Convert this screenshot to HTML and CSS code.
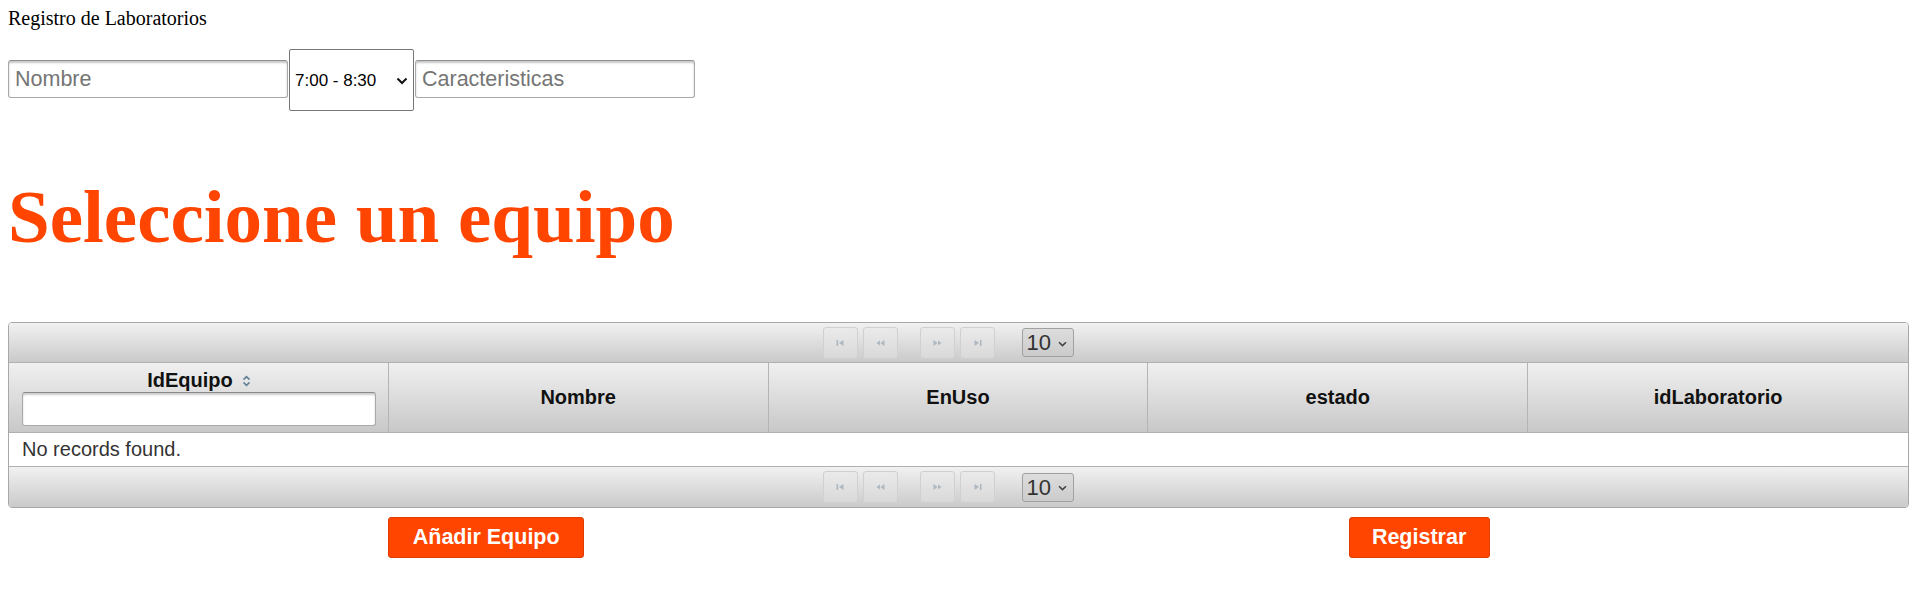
FILE: index.html
```html
<!DOCTYPE html>
<html lang="es">
<head>
<meta charset="utf-8">
<title>Registro de Laboratorios</title>
<link rel="stylesheet" href="styles.css">
</head>
<body>
<div class="title">Registro de Laboratorios</div>
<form class="lab-form">
  <input class="field" type="text" placeholder="Nombre">
  <span class="select-wrap hour-wrap">
    <select class="hour-select"><option>7:00 - 8:30</option></select>
    <svg class="chev chev-hour" width="12" height="8" viewBox="0 0 12 8"><path d="M1.5 1.5L6 6l4.5-4.5"/></svg>
  </span>
  <input class="field" type="text" placeholder="Caracteristicas">
</form>
<h1 class="headline">Seleccione un equipo</h1>
<div class="datatable">
  <div class="paginator paginator-top">
    <span class="pg-btn pg-first"><svg width="11" height="8" viewBox="0 0 11 8"><rect x="1.5" y="1" width="1.6" height="6"/><path d="M8.5 1v6L4 4z"/></svg></span>
    <span class="pg-btn pg-prev"><svg width="11" height="8" viewBox="0 0 11 8"><path d="M5 1.5v5L1.5 4zM9.5 1v6L5.5 4z"/></svg></span>
    <span class="pg-btn pg-next"><svg width="11" height="8" viewBox="0 0 11 8"><path d="M1.5 1v6L5.5 4zM6 1.5v5L9.5 4z"/></svg></span>
    <span class="pg-btn pg-last"><svg width="11" height="8" viewBox="0 0 11 8"><path d="M2.5 1v6L7 4z"/><rect x="7.9" y="1" width="1.6" height="6"/></svg></span>
    <span class="select-wrap rows-wrap">
      <select class="rows-select"><option>10</option></select>
      <svg class="chev chev-rows" width="9" height="6" viewBox="0 0 9 6"><path d="M1 1.2L4.5 4.6 8 1.2"/></svg>
    </span>
  </div>
  <div class="dt-header">
    <div class="th th-filter">
      <div class="th-title">IdEquipo <svg class="sort-icon" width="9" height="12" viewBox="0 0 9 12"><path d="M1.5 4.6L4.5 1.6L7.5 4.6M1.5 7.4L4.5 10.4L7.5 7.4"/></svg></div>
      <input class="filter-input" type="text">
    </div>
    <div class="th">Nombre</div>
    <div class="th">EnUso</div>
    <div class="th">estado</div>
    <div class="th">idLaboratorio</div>
  </div>
  <div class="dt-empty">No records found.</div>
  <div class="paginator paginator-bottom">
    <span class="pg-btn pg-first"><svg width="11" height="8" viewBox="0 0 11 8"><rect x="1.5" y="1" width="1.6" height="6"/><path d="M8.5 1v6L4 4z"/></svg></span>
    <span class="pg-btn pg-prev"><svg width="11" height="8" viewBox="0 0 11 8"><path d="M5 1.5v5L1.5 4zM9.5 1v6L5.5 4z"/></svg></span>
    <span class="pg-btn pg-next"><svg width="11" height="8" viewBox="0 0 11 8"><path d="M1.5 1v6L5.5 4zM6 1.5v5L9.5 4z"/></svg></span>
    <span class="pg-btn pg-last"><svg width="11" height="8" viewBox="0 0 11 8"><path d="M2.5 1v6L7 4z"/><rect x="7.9" y="1" width="1.6" height="6"/></svg></span>
    <span class="select-wrap rows-wrap">
      <select class="rows-select"><option>10</option></select>
      <svg class="chev chev-rows" width="9" height="6" viewBox="0 0 9 6"><path d="M1 1.2L4.5 4.6 8 1.2"/></svg>
    </span>
  </div>
</div>
<div class="actions">
  <button class="btn btn-add" type="button">Añadir Equipo</button>
  <button class="btn btn-register" type="button">Registrar</button>
</div>
</body>
</html>
```
FILE: styles.css
```css
html, body {
  background: #ffffff;
}
body {
  margin: 8px;
  font-family: "Liberation Serif", "Times New Roman", serif;
  font-size: 20px;
  color: #000;
}
.title {
  line-height: 20px;
  height: 20px;
}
.lab-form {
  display: flex;
  align-items: flex-start;
  gap: 1px;
  margin: 21px 0 0 0;
  height: 62px;
}
.field {
  box-sizing: border-box;
  width: 280px;
  height: 38px;
  margin-top: 11px;
  padding: 0 6px;
  border: 1px solid #a9a9a9;
  border-top-color: #8f8f8f;
  border-radius: 3px;
  box-shadow: inset 0 2px 2px rgba(0,0,0,0.22);
  font-family: "Liberation Sans", Arial, sans-serif;
  font-size: 21.5px;
  color: #222;
  background: #fff;
  outline: none;
}
.field::placeholder {
  color: #757575;
}
.select-wrap {
  position: relative;
  display: inline-flex;
}
.chev {
  position: absolute;
  top: 50%;
  fill: none;
  pointer-events: none;
}
.hour-select {
  -webkit-appearance: none;
  appearance: none;
  box-sizing: border-box;
  width: 125px;
  height: 62px;
  padding: 0 0 0 5px;
  border: 1px solid #767676;
  border-radius: 2px;
  background: #fff;
  font-family: "Liberation Sans", Arial, sans-serif;
  font-size: 17px;
  color: #000;
}
.chev-hour {
  right: 6px;
  margin-top: -3px;
  stroke: #111;
  stroke-width: 2;
}
.headline {
  margin: 63px 0 62px 0;
  font-family: "Liberation Serif", "Times New Roman", serif;
  font-weight: bold;
  font-size: 75px;
  line-height: 86px;
  color: #ff4500;
}
.datatable {
  border: 1px solid #a8a8a8;
  border-radius: 4px;
  overflow: hidden;
  font-family: "Liberation Sans", Arial, sans-serif;
}
.paginator {
  display: flex;
  align-items: center;
  justify-content: center;
  padding-right: 21px;
  background: linear-gradient(to bottom, #f1f1f1, #cacaca);
}
.paginator-top {
  height: 39px;
  border-bottom: 1px solid #b0b0b0;
}
.paginator-bottom {
  height: 40px;
}
.pg-btn {
  box-sizing: border-box;
  width: 35px;
  height: 32px;
  display: flex;
  align-items: center;
  justify-content: center;
  border: 1px solid #d0d0d0;
  border-radius: 3px;
  background: linear-gradient(to bottom, #eaeaea, #d9d9d9);
}
.pg-btn svg {
  fill: #aeb8c1;
}
.pg-prev, .pg-last {
  margin-left: 5px;
}
.pg-next {
  margin-left: 22px;
}
.rows-wrap {
  margin-left: 27px;
}
.rows-select {
  -webkit-appearance: none;
  appearance: none;
  box-sizing: border-box;
  width: 52px;
  height: 29px;
  padding: 0 0 0 4px;
  border: 1px solid #a0a0a0;
  border-radius: 3px;
  background: linear-gradient(to bottom, #dddddd, #cbcbcb);
  font-family: "Liberation Sans", Arial, sans-serif;
  font-size: 22px;
  color: #333;
}
.chev-rows {
  right: 7px;
  margin-top: -2px;
  stroke: #444;
  stroke-width: 1.6;
}
.dt-header {
  display: grid;
  grid-template-columns: repeat(5, 1fr);
  height: 69px;
  border-bottom: 1px solid #b0b0b0;
  background: linear-gradient(to bottom, #f0f0f0, #c8c8c8);
}
.th {
  display: flex;
  align-items: center;
  justify-content: center;
  border-right: 1px solid #b4b4b4;
  font-weight: bold;
  font-size: 20px;
  color: #111;
}
.th:last-child {
  border-right: none;
}
.th-filter {
  flex-direction: column;
  justify-content: flex-start;
  align-items: stretch;
  padding: 6px 12px 0 13px;
}
.th-title {
  display: flex;
  align-items: center;
  justify-content: center;
  gap: 9px;
  line-height: 23px;
  height: 23px;
}
.sort-icon {
  fill: none;
  stroke: #5f7f95;
  stroke-width: 1.5;
}
.filter-input {
  box-sizing: border-box;
  height: 34px;
  width: 100%;
  border: 1px solid #a9a9a9;
  border-top-color: #8a8a8a;
  border-radius: 3px;
  box-shadow: inset 0 2px 2px rgba(0,0,0,0.2);
  background: #fff;
  font-size: 18px;
  outline: none;
}
.dt-empty {
  height: 33px;
  line-height: 33px;
  padding-left: 13px;
  font-size: 20px;
  color: #333;
  background: #fff;
  border-bottom: 1px solid #b0b0b0;
}
.actions {
  display: flex;
  margin-top: 9px;
}
.btn {
  box-sizing: border-box;
  height: 41px;
  padding: 0 22px;
  border: 1px solid #e03c00;
  border-radius: 3px;
  background: #ff4500;
  color: #fff;
  font-family: "Liberation Sans", Arial, sans-serif;
  font-weight: bold;
  font-size: 21.5px;
  line-height: 39px;
}
.btn-add {
  margin-left: 20%;
  width: 196px;
}
.btn-register {
  margin-left: calc(40% + 4px);
  width: 141px;
}
```
